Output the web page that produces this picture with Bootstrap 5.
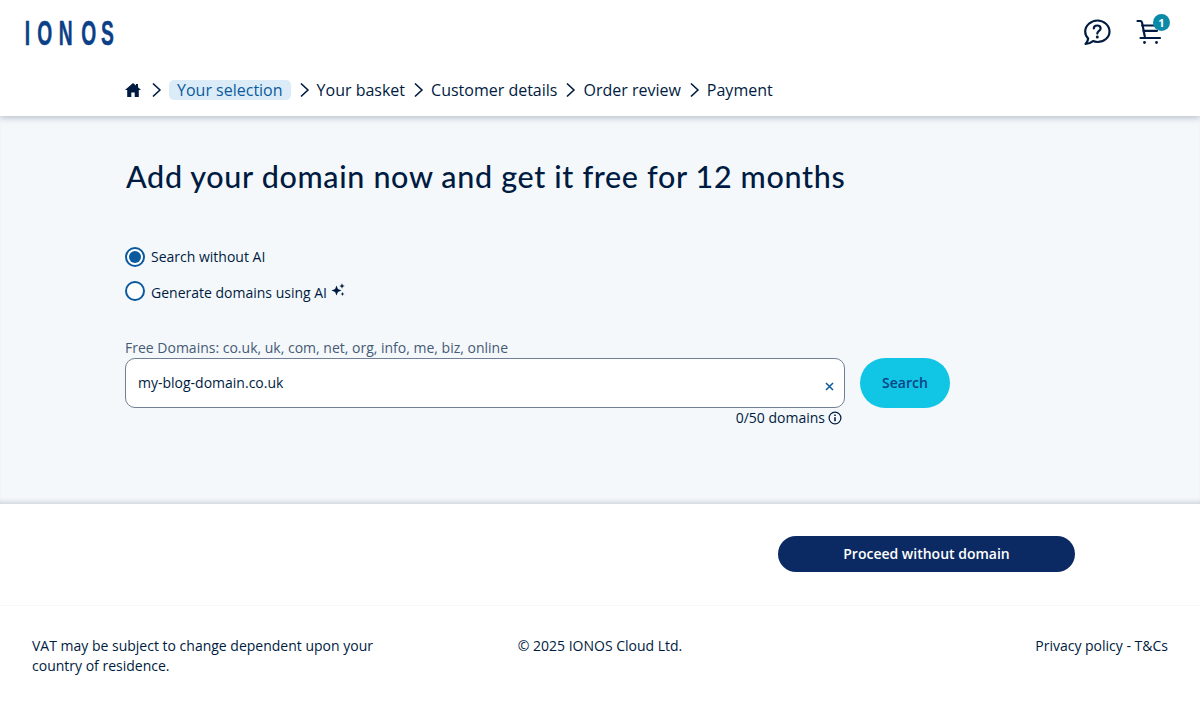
<!DOCTYPE html>
<html lang="en">
<head>
<meta charset="utf-8">
<title>IONOS</title>
<link rel="stylesheet" href="https://cdn.jsdelivr.net/npm/bootstrap@5.3.0/dist/css/bootstrap.min.css">
<style>
body{font-family:"Open Sans",sans-serif;font-size:14px;color:#001b41;background:#fff;height:720px;overflow:hidden}
.hdr{height:116px;background:#fff;box-shadow:0 2px 6px rgba(0,27,65,.25);position:relative;z-index:2}
.hdr-top{height:64px;padding:0 36px 0 24px}
.crumbs{height:52px;padding-left:125px;font-size:16px;padding-bottom:1px;color:#001b41}
.chev{width:9px;height:14px;margin:0 8px 0 9px;flex:none}
.chev-first{margin:0 8px 0 11px}
.crumb-on{background:#dbecf8;color:#0b5a9e;border-radius:5px;padding:0 8px;line-height:20px}
.cart-wrap{position:relative;width:28px;height:28px;margin-left:25px}
.cart-badge{position:absolute;left:17px;top:-4px;width:17px;height:17px;border-radius:50%;background:#0b8aa8;color:#fff;font-size:11px;font-weight:700;line-height:17px;text-align:center}
.main-area{height:388px;background:#f4f8fb;padding:42px 0 0 125px;box-shadow:inset 0 -5px 5px -3px rgba(0,27,65,.16)}
.main-title{font-family:Lato,sans-serif;font-size:30.500px;font-weight:500;letter-spacing:.66px;color:#001b41;line-height:36px;margin:0 0 53px 1px}
.radio-row{height:20px;margin-bottom:15px;font-size:14px}
.radio-dot{width:20px;height:20px;border-radius:50%;border:2px solid #0b5a9e;background:#fff;flex:none;margin-right:6px;display:flex;align-items:center;justify-content:center}
.radio-dot i{display:block;width:12px;height:12px;border-radius:50%;background:#0b5a9e}
.tx-up{padding-bottom:2px}
.dot-up{margin-bottom:2px}
.free-label{font-size:14px;line-height:16px;color:#465a75;margin-top:38px;height:18px}
.field-row{width:825px;gap:15px}
.field{width:720px;height:50px;border:1px solid #718095;border-radius:10px;background:#fff;padding:0 10px 2px 12px;font-size:14px;color:#001b41}
.clear-x{width:9px;height:9px;margin-top:9px}
.search-btn{width:90px;height:50px;border-radius:25px;background:#11c5e5;color:#0b4285;font-size:14px;font-weight:600;border:0;padding:0 0 2px}
.count{width:720px;font-size:14px;line-height:20px;padding-right:3px;gap:3px}
.proceed{height:102px;background:#fff;padding:32px 125px 0 0;border-bottom:1px solid #f7f8fa}
.proceed-btn{width:297px;height:36px;border-radius:18px;background:#0b2a63;color:#fff;font-size:14px;font-weight:600;border:0;padding:0 0 2px}
.foot{padding:30px 32px 0;font-size:14px;line-height:20px}
.foot-a{width:372px}
.foot-b{width:228px;text-align:center}
</style>
</head>
<body>
<header class="hdr">
  <div class="hdr-top d-flex align-items-center justify-content-between">
    <svg width="92" height="44" viewBox="0 0 92 44" role="img" aria-label="IONOS"><text transform="scale(.55 1)" x="1.500 24 63 104 140" y="35" font-family="Liberation Sans" font-weight="700" font-size="35" fill="#0b3f87" stroke="#0b3f87" stroke-width=".5">IONOS</text></svg>
    <div class="d-flex align-items-center">
      <svg width="28" height="28" viewBox="0 0 28 28" fill="none" stroke="#001b41" stroke-width="2.200" stroke-linecap="round" stroke-linejoin="round"><path d="M14.500 2.500C21 2.500 26.500 7.500 26.500 13.500C26.500 19.500 21 24 14.500 24C12.800 24 11.400 23.700 10 23.100C7.800 24.800 5.500 25.800 2.500 26C4 24.500 4.900 22.800 5.200 20.500C3.400 18.700 2.200 16.300 2.200 13.500C2.200 7.500 8 2.500 14.500 2.500Z"/><path d="M10.800 10.500C10.800 8.600 12.400 7.500 14.200 7.500C16.200 7.500 17.600 8.700 17.600 10.400C17.600 13 14.300 12.900 14.300 15.600"/><path d="M14.300 19V19.200" stroke-width="2.800"/></svg>
      <div class="cart-wrap">
        <svg width="28" height="28" viewBox="0 0 28 28" fill="none" stroke="#001b41" stroke-width="2.200" stroke-linecap="round" stroke-linejoin="round"><path d="M1.500 3H4.300C5.300 3 5.800 3.600 6 4.400L8.800 18.500"/><path d="M6.200 7.500H22"/><path d="M7.500 12.800H21"/><path d="M4.500 20H24"/><circle cx="8.500" cy="24.500" r="1.400" fill="#001b41" stroke="none"/><circle cx="20.500" cy="24.500" r="1.400" fill="#001b41" stroke="none"/></svg>
        <span class="cart-badge">1</span>
      </div>
    </div>
  </div>
  <nav class="crumbs d-flex align-items-center">
    <svg width="16" height="14" viewBox="0 0 16 14" class="flex-none"><path fill="#001b41" d="M8 0 L11 2.600V1H13V4.300L16 7H13.800V14H9.700V9.500H6.300V14H2.200V7H0Z"/></svg>
    <svg class="chev chev-first" viewBox="0 0 9 14" fill="none" stroke="#001b41" stroke-width="1.700" stroke-linecap="round" stroke-linejoin="round"><path d="M1.500 1L8 7L1.500 13"/></svg>
    <span class="crumb-on">Your selection</span>
    <svg class="chev" viewBox="0 0 9 14" fill="none" stroke="#001b41" stroke-width="1.700" stroke-linecap="round" stroke-linejoin="round"><path d="M1.500 1L8 7L1.500 13"/></svg>
    <span>Your basket</span>
    <svg class="chev" viewBox="0 0 9 14" fill="none" stroke="#001b41" stroke-width="1.700" stroke-linecap="round" stroke-linejoin="round"><path d="M1.500 1L8 7L1.500 13"/></svg>
    <span>Customer details</span>
    <svg class="chev" viewBox="0 0 9 14" fill="none" stroke="#001b41" stroke-width="1.700" stroke-linecap="round" stroke-linejoin="round"><path d="M1.500 1L8 7L1.500 13"/></svg>
    <span>Order review</span>
    <svg class="chev" viewBox="0 0 9 14" fill="none" stroke="#001b41" stroke-width="1.700" stroke-linecap="round" stroke-linejoin="round"><path d="M1.500 1L8 7L1.500 13"/></svg>
    <span>Payment</span>
  </nav>
</header>
<main class="main-area">
  <h1 class="main-title">Add your domain now and get it free for 12 months</h1>
  <div class="radio-row d-flex align-items-center"><span class="radio-dot"><i></i></span><span class="tx-up">Search without AI</span></div>
  <div class="radio-row d-flex align-items-center"><span class="radio-dot dot-up"></span><span>Generate domains using AI</span>
    <svg class="ms-1 mb-1" width="14" height="14" viewBox="0 0 14 14" fill="#001b41"><path d="M5.500 2.500L6.900 6.100L10.500 7.500L6.900 8.900L5.500 12.500L4.100 8.900L.5 7.500L4.100 6.100Z"/><path d="M11 .3L11.800 2.200L13.700 3L11.800 3.800L11 5.700L10.200 3.800L8.300 3L10.200 2.200Z"/><path d="M11.500 9L12.100 10.400L13.500 11L12.100 11.600L11.500 13L10.900 11.600L9.500 11L10.900 10.400Z"/></svg>
  </div>
  <div class="free-label">Free Domains: co.uk, uk, com, net, org, info, me, biz, online</div>
  <div class="field-row d-flex align-items-start">
    <div class="field d-flex align-items-center justify-content-between">
      <span>my-blog-domain.co.uk</span>
      <svg class="clear-x" viewBox="0 0 9 9" fill="none" stroke="#0b5a9e" stroke-width="1.500"><path d="M1 1L8 8M8 1L1 8"/></svg>
    </div>
    <button type="button" class="search-btn btn">Search</button>
  </div>
  <div class="count d-flex align-items-center justify-content-end">
    <span>0/50 domains</span>
    <svg width="14" height="14" viewBox="0 0 14 14" fill="none" stroke="#001b41" stroke-width="1.200"><circle cx="7" cy="7" r="5.900"/><path d="M7 6.200V10.300" stroke-width="1.600"/><path d="M7 3.500V5" stroke-width="1.600"/></svg>
  </div>
</main>
<section class="proceed d-flex justify-content-end align-items-start">
  <button type="button" class="proceed-btn btn">Proceed without domain</button>
</section>
<footer class="foot d-flex justify-content-between">
  <div class="foot-a">VAT may be subject to change dependent upon your country of residence.</div>
  <div class="foot-b">© 2025 IONOS Cloud Ltd.</div>
  <div class="foot-a text-end">Privacy policy - T&amp;Cs</div>
</footer>
<script src="https://cdn.jsdelivr.net/npm/bootstrap@5.3.0/dist/js/bootstrap.bundle.min.js"></script>
</body>
</html>
